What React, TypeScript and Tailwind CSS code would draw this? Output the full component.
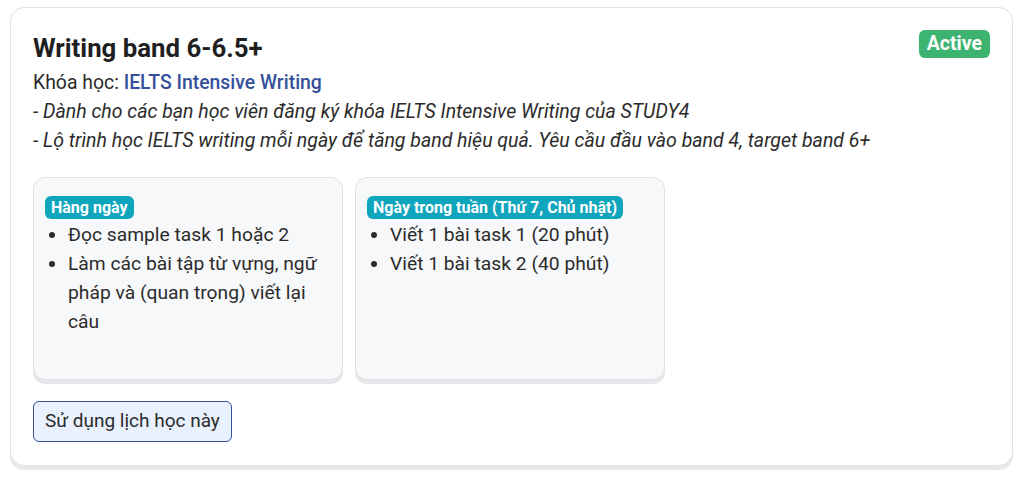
import React from 'react';

const daily = ['Đọc sample task 1 hoặc 2', 'Làm các bài tập từ vựng, ngữ pháp và (quan trọng) viết lại câu'];
const weekend = ['Viết 1 bài task 1 (20 phút)', 'Viết 1 bài task 2 (40 phút)'];

const ScheduleBox = ({ label, items }: { label: string; items: string[] }) => (
    <div className="w-[310px] h-[203px] bg-[#f7f8fa] border border-[#e0e0e0] rounded-xl shadow-[0_4px_0_#e6e7ea] pt-[18px] px-[11px]">
        <span className="inline-block bg-[#0ea5bd] text-white text-[16px] font-bold leading-[23px] px-[6px] rounded-md">{label}</span>
        <ul className="list-disc pl-[23px] text-[19.25px] leading-[29px] text-[#2b2b2b]">
            {items.map((it) => (
                <li key={it}>{it}</li>
            ))}
        </ul>
    </div>
);

export default function App() {
    return (
        <div className="w-[1026px] h-[483px] bg-white pt-[7px] pl-[10px] font-['Roboto',sans-serif]">
            <div className="w-[1003px] h-[459px] bg-white border border-[#e0e0e0] rounded-[14px] shadow-[0_4px_0_#e8e9ec] pt-[22px] px-[22px]">
                <div className="flex items-start justify-between">
                    <h1 className="text-[25.8px] font-bold leading-[36px] text-[#1f1f1f]">Writing band 6-6.5+</h1>
                    <span className="mt-[0px] bg-[#3cb371] text-white text-[19.5px] font-bold leading-[28px] px-[8px] rounded-md">Active</span>
                </div>
                <p className="text-[19.4px] leading-[28px] mt-[3px] text-[#2b2b2b]">
                    Khóa học: <span className="text-[#35509a] font-medium">IELTS Intensive Writing</span>
                </p>
                <p className="text-[19.5px] leading-[29px] italic text-[#2b2b2b]">- Dành cho các bạn học viên đăng ký khóa IELTS Intensive Writing của STUDY4</p>
                <p className="text-[19.5px] leading-[29px] italic text-[#2b2b2b]">- Lộ trình học IELTS writing mỗi ngày để tăng band hiệu quả. Yêu cầu đầu vào band 4, target band 6+</p>
                <div className="flex gap-[12px] mt-[22px]">
                    <ScheduleBox label="Hàng ngày" items={daily} />
                    <ScheduleBox label="Ngày trong tuần (Thứ 7, Chủ nhật)" items={weekend} />
                </div>
                <button className="mt-[21px] h-[41px] px-[11px] bg-[#e8f1fd] border border-[#35509a] rounded-md text-[19px] text-[#2b2b2b]">
                    Sử dụng lịch học này
                </button>
            </div>
        </div>
    );
}
